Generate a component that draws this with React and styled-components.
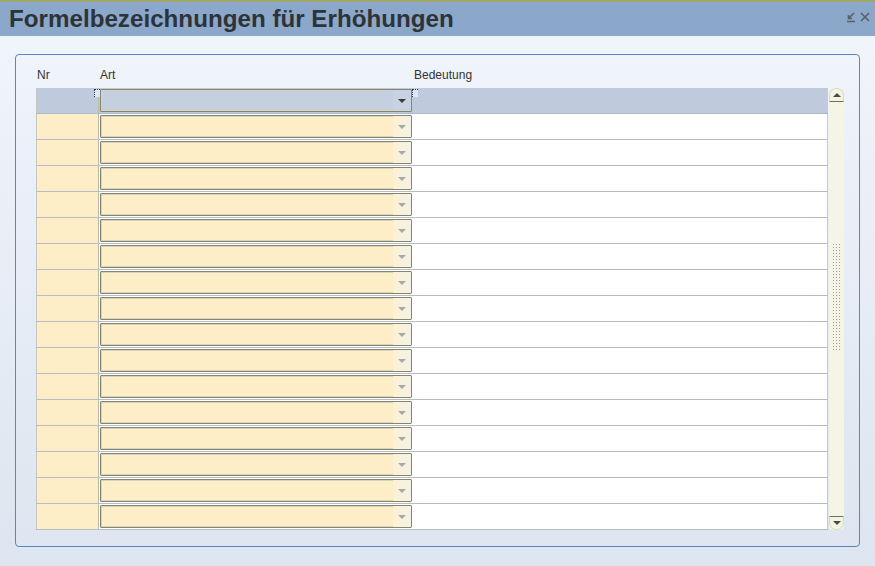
import React from 'react';
import styled, { createGlobalStyle } from 'styled-components';

const GlobalStyle = createGlobalStyle`
  html, body { margin: 0; padding: 0; }
  body { font-family: "Liberation Sans", Arial, sans-serif; }
`;

const ROWS = 17;

const Page = styled.div`
  width: 875px;
  height: 566px;
  display: flex;
  flex-direction: column;
  overflow: hidden;
`;

const TitleBar = styled.div`
  height: 34px;
  border-top: 2px solid #a3a66a;
  background: #8ba7c9;
  display: flex;
  align-items: center;
  justify-content: space-between;
  padding: 0 4px 0 9px;
`;

const Title = styled.h1`
  margin: 0;
  font-size: 24.2px;
  font-weight: bold;
  color: #2e3338;
  margin-top: -1px;
`;

const TitleIcons = styled.div`
  display: flex;
  gap: 2px;
  align-items: center;
  margin-top: -4px;
`;

const Body = styled.div`
  flex: 1;
  padding: 18px 15px 19px 15px;
  background: linear-gradient(#f0f4fb, #dde5f0);
  display: flex;
`;

const Group = styled.div`
  flex: 1;
  border: 1px solid #5d86bf;
  border-radius: 4px;
  padding: 0 13px 15px 20px;
  display: flex;
  flex-direction: column;
`;

const HeaderRow = styled.div`
  height: 33px;
  display: grid;
  grid-template-columns: 63px 315px 414px;
  align-items: center;
  font-size: 12px;
  color: #333;
  padding-top: 7px;
  box-sizing: border-box;
`;

const HeaderCell = styled.div`
  padding-left: ${p => p.$pad}px;
`;

const TableArea = styled.div`
  display: flex;
`;

const Table = styled.div`
  width: 792px;
  position: relative;
`;

const Row = styled.div`
  height: 26px;
  display: grid;
  grid-template-columns: 63px 315px 414px;
  border-bottom: 1px solid ${p => (p.$selected ? '#aeb9c8' : '#b7bcc2')};
  box-sizing: border-box;
  position: relative;
`;

const NrCell = styled.div`
  background: ${p => (p.$selected ? '#bfcbdd' : '#fdeec8')};
  border-left: 1px solid #c6c6c0;
  border-right: 1px solid #b9b9a8;
`;

const ArtCell = styled.div`
  background: ${p => (p.$selected ? '#bfcbdd' : '#ffffff')};
  padding: 1px 2px 0 1px;
`;

const InfoCell = styled.div`
  background: ${p => (p.$selected ? '#bfcbdd' : '#ffffff')};
  border-right: 1px solid #c8ccd2;
`;

const Combo = styled.div`
  height: 23px;
  box-sizing: border-box;
  border: 1px solid #86866f;
  box-shadow: inset 0 0 0 1px #d6d4bf;
  border-radius: 1px;
  display: flex;
  background: ${p => (p.$selected ? '#c4cfe0' : '#fdeec8')};
`;

const ComboText = styled.div`
  flex: 1;
`;

const ComboButton = styled.div`
  width: 18px;
  display: flex;
  align-items: center;
  justify-content: center;
  background: ${p =>
    p.$selected ? '#c8d2e2' : 'linear-gradient(90deg, #fcf1d4, #f4f1e6)'};
  &::after {
    content: '';
    border-left: 4px solid transparent;
    border-right: 4px solid transparent;
    border-top: 4px solid ${p => (p.$selected ? '#3d3d3d' : '#a8a8a8')};
    margin-top: 1px;
  }
`;

const Marker = styled.div`
  position: absolute;
  top: 1px;
  left: ${p => p.$left}px;
  width: 5px;
  height: 7px;
  border-top: 1px dotted #2a3a55;
  border-left: 1px dotted #2a3a55;
  background: #dbe8f8;
`;

const Scrollbar = styled.div`
  width: 15px;
  margin-left: 1px;
  background: #f5f5e6;
  border-radius: 7px 7px 4px 4px;
  display: flex;
  flex-direction: column;
  justify-content: space-between;
  align-items: center;
`;

const ScrollButton = styled.div`
  width: 15px;
  height: 14px;
  box-sizing: border-box;
  display: flex;
  align-items: center;
  justify-content: center;
  border-radius: ${p => (p.$up ? '7px 7px 0 0' : '0 0 7px 7px')};
  border: 1px solid #dcdcc4;
  ${p => (p.$up ? 'border-bottom: 1px solid #6e7450;' : 'border-top: 1px solid #6e7450;')}
  background: #f3f3e2;
  &::after {
    content: '';
    border-left: 4px solid transparent;
    border-right: 4px solid transparent;
    ${p => (p.$up ? 'border-bottom' : 'border-top')}: 4px solid #4a4a4a;
  }
`;

const Grip = styled.div`
  width: 9px;
  height: 108px;
  margin-bottom: 24px;
  background-image: radial-gradient(circle, #8a8a78 0.7px, transparent 0.9px);
  background-size: 3px 3px;
  opacity: 0.8;
`;

function Titlebuttons() {
  return (
    <TitleIcons>
      <svg width="12" height="12" viewBox="0 0 12 12">
        <path d="M9 2 L3.5 7.5 M3.5 4 V7.5 H7 M2 10.5 H10" stroke="#5b5f66" strokeWidth="1.6" fill="none" />
      </svg>
      <svg width="12" height="12" viewBox="0 0 12 12">
        <path d="M2 2 L10 10 M10 2 L2 10" stroke="#5b5f66" strokeWidth="1.6" fill="none" />
      </svg>
    </TitleIcons>
  );
}

export default function App() {
  const rows = Array.from({ length: ROWS }, (_, i) => i);
  return (
    <Page>
      <GlobalStyle />
      <TitleBar>
        <Title>Formelbezeichnungen für Erhöhungen</Title>
        <Titlebuttons />
      </TitleBar>
      <Body>
        <Group>
          <HeaderRow>
            <HeaderCell $pad={1}>Nr</HeaderCell>
            <HeaderCell $pad={1}>Art</HeaderCell>
            <HeaderCell $pad={0}>Bedeutung</HeaderCell>
          </HeaderRow>
          <TableArea>
            <Table>
              {rows.map(i => {
                const sel = i === 0;
                return (
                  <Row key={i} $selected={sel}>
                    <NrCell $selected={sel} />
                    <ArtCell $selected={sel}>
                      <Combo $selected={sel}>
                        <ComboText />
                        <ComboButton $selected={sel} />
                      </Combo>
                    </ArtCell>
                    <InfoCell $selected={sel} />
                    {sel && <Marker $left={58} />}
                    {sel && <Marker $left={376} />}
                  </Row>
                );
              })}
            </Table>
            <Scrollbar>
              <ScrollButton $up />
              <Grip />
              <ScrollButton />
            </Scrollbar>
          </TableArea>
        </Group>
      </Body>
    </Page>
  );
}
